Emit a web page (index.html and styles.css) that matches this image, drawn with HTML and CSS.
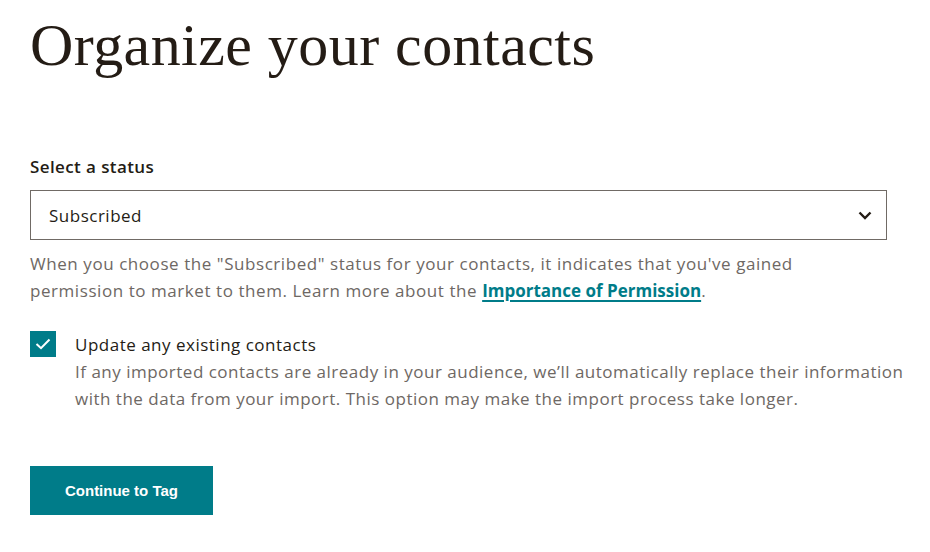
FILE: index.html
```html
<!DOCTYPE html>
<html lang="en">
<head>
<meta charset="utf-8">
<title>Organize your contacts</title>
<link rel="stylesheet" href="styles.css">
</head>
<body>
<main class="page">
  <h1 class="title">Organize your contacts</h1>
  <section class="field">
    <label class="field-label" for="status">Select a status</label>
    <div class="select">
      <span class="select-value">Subscribed</span>
      <svg class="chevron" width="14" height="9" viewBox="0 0 14 9" aria-hidden="true"><path d="M1.5 1.5 L7 7 L12.5 1.5" fill="none" stroke="#241c15" stroke-width="2.4"/></svg>
    </div>
    <p class="help">When you choose the "Subscribed" status for your contacts, it indicates that you've gained<br>permission to market to them. Learn more about the <a href="#" class="link">Importance of Permission</a>.</p>
  </section>
  <section class="check-row">
    <span class="checkbox"><svg width="16" height="12" viewBox="0 0 16 12" aria-hidden="true"><path d="M1.5 6 L6 10.2 L14.5 1.5" fill="none" stroke="#fff" stroke-width="2"/></svg></span>
    <div class="check-text">
      <div class="check-label">Update any existing contacts</div>
      <p class="check-desc">If any imported contacts are already in your audience, we’ll automatically replace their information<br>with the data from your import. This option may make the import process take longer.</p>
    </div>
  </section>
  <button class="btn" type="button">Continue to Tag</button>
</main>
</body>
</html>
```
FILE: styles.css
```css
html, body {
  margin: 0;
  padding: 0;
  background: #fff;
}
body {
  font-family: "Open Sans", "Liberation Sans", sans-serif;
  color: #241c15;
}
.page {
  padding: 13px 30px 0 30px;
  width: 880px;
}
.title {
  font-family: "Liberation Serif", serif;
  font-weight: 400;
  font-size: 60px;
  line-height: 64px;
  letter-spacing: 0.45px;
  margin: 0 0 80px 0;
  color: #241c15;
}
.field-label {
  display: block;
  font-size: 17px;
  font-weight: 600;
  letter-spacing: 0.4px;
  line-height: 20px;
  margin-bottom: 13px;
}
.select {
  width: 857px;
  height: 50px;
  box-sizing: border-box;
  border: 1px solid #706a65;
  display: flex;
  align-items: center;
  justify-content: space-between;
  padding: 0 14px 0 18px;
}
.select-value {
  font-size: 17px;
  letter-spacing: 0.5px;
}
.help {
  margin: 10px 0 0 0;
  font-size: 17px;
  letter-spacing: 0.56px;
  line-height: 27px;
  color: #6e6864;
}
.link {
  color: #007c89;
  font-weight: 700;
  letter-spacing: 0;
  text-decoration: underline;
  text-decoration-thickness: 2px;
  text-underline-offset: 3px;
}
.check-row {
  display: flex;
  gap: 19px;
  margin-top: 26px;
}
.checkbox {
  width: 26px;
  height: 26px;
  background: #007c89;
  display: flex;
  align-items: center;
  justify-content: center;
  flex: none;
  margin-top: 1px;
}
.check-label {
  font-size: 17px;
  letter-spacing: 0.5px;
  line-height: 27px;
  padding-top: 1px;
}
.check-desc {
  margin: 0;
  font-size: 17px;
  letter-spacing: 0.5px;
  line-height: 27px;
  color: #6e6864;
}
.btn {
  display: block;
  margin-top: 54px;
  width: 183px;
  height: 49px;
  background: #007c89;
  color: #fff;
  border: 0;
  font-family: "Liberation Sans", sans-serif;
  font-size: 15px;
  font-weight: 600;
}
```
